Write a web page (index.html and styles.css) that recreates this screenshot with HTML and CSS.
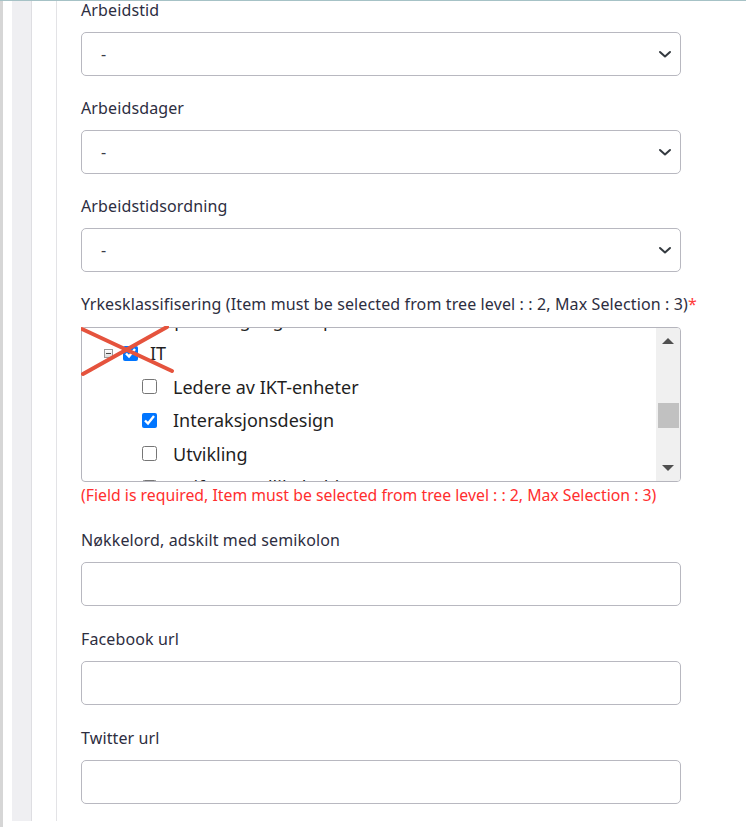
FILE: index.html
```html
<!DOCTYPE html>
<html lang="no">
<head>
<meta charset="utf-8">
<title>Skjema</title>
<link rel="stylesheet" href="styles.css">
</head>
<body>
<div class="shell">
  <div class="edge"></div>
  <div class="frame">
    <div class="pad"></div>
    <div class="rail"></div>
    <div class="gutter"></div>
    <main class="content">
      <form class="form">
        <div class="group">
          <label class="label">Arbeidstid</label>
          <div class="select"><span class="dash">-</span><svg class="chev" width="14" height="9" viewBox="0 0 14 9"><path d="M2 2 L7 6.5 L12 2" fill="none" stroke="#343a40" stroke-width="2" stroke-linecap="round" stroke-linejoin="round"/></svg></div>
        </div>
        <div class="group">
          <label class="label">Arbeidsdager</label>
          <div class="select"><span class="dash">-</span><svg class="chev" width="14" height="9" viewBox="0 0 14 9"><path d="M2 2 L7 6.5 L12 2" fill="none" stroke="#343a40" stroke-width="2" stroke-linecap="round" stroke-linejoin="round"/></svg></div>
        </div>
        <div class="group">
          <label class="label">Arbeidstidsordning</label>
          <div class="select"><span class="dash">-</span><svg class="chev" width="14" height="9" viewBox="0 0 14 9"><path d="M2 2 L7 6.5 L12 2" fill="none" stroke="#343a40" stroke-width="2" stroke-linecap="round" stroke-linejoin="round"/></svg></div>
        </div>
        <div class="group group-tree">
          <label class="label label-tree">Yrkesklassifisering (Item must be selected from tree level : : 2, Max Selection : 3)<span class="req">*</span></label>
          <div class="tree-wrap">
            <div class="tree">
              <div class="tree-list">
                <div class="row lvl1 top"><span class="exp"></span><input type="checkbox" class="cb"><span class="txt">Skipsfart og regnskap</span></div>
                <div class="row lvl1"><span class="exp exp-open"></span><input type="checkbox" class="cb" checked><span class="txt">IT</span></div>
                <div class="row lvl2"><input type="checkbox" class="cb"><span class="txt">Ledere av IKT-enheter</span></div>
                <div class="row lvl2"><input type="checkbox" class="cb" checked><span class="txt">Interaksjonsdesign</span></div>
                <div class="row lvl2"><input type="checkbox" class="cb"><span class="txt">Utvikling</span></div>
                <div class="row lvl2"><input type="checkbox" class="cb"><span class="txt">Drift og vedlikehold</span></div>
              </div>
              <div class="sb">
                <div class="sb-btn"><span class="arr-up"></span></div>
                <div class="sb-space-top"></div>
                <div class="sb-thumb"></div>
                <div class="sb-space"></div>
                <div class="sb-btn"><span class="arr-down"></span></div>
              </div>
            </div>
            <svg class="cross" width="96" height="54" viewBox="0 0 96 54"><path d="M1 3 L91 45 M2 48 L86 1" fill="none" stroke="#e5533d" stroke-width="4" stroke-linecap="round"/></svg>
          </div>
          <div class="error">(Field is required, Item must be selected from tree level : : 2, Max Selection : 3)</div>
        </div>
        <div class="group group-input">
          <label class="label">Nøkkelord, adskilt med semikolon</label>
          <input class="input" type="text">
        </div>
        <div class="group group-input">
          <label class="label">Facebook url</label>
          <input class="input" type="text">
        </div>
        <div class="group group-input">
          <label class="label">Twitter url</label>
          <input class="input" type="text">
        </div>
      </form>
    </main>
  </div>
</div>
</body>
</html>
```
FILE: styles.css
```css
html, body {
  margin: 0;
  padding: 0;
  background: #ffffff;
}
body {
  font-family: "Noto Sans", "Open Sans", sans-serif;
  color: #2d2e3f;
}
.shell {
  display: flex;
  align-items: flex-start;
  border-top: 1px solid #a6c2c6;
  height: 826px;
  overflow: hidden;
}
.edge {
  width: 3px;
  height: 826px;
  background: #d6d6d6;
  flex: none;
}
.frame {
  display: flex;
  flex: 1;
  height: 820px;
  min-width: 0;
}
.pad {
  width: 9px;
  flex: none;
}
.rail {
  width: 19px;
  flex: none;
  background: #efeff2;
  border-right: 1px solid #dedee2;
}
.gutter {
  width: 24px;
  flex: none;
  border-right: 1px solid #e3e3e6;
}
.content {
  flex: 1;
  padding-left: 24px;
  overflow: hidden;
}
.form {
  width: 600px;
  margin-top: -3px;
}
.group {
  margin-bottom: 20px;
}
.group-tree {
  margin-bottom: 23px;
}
.group-input {
  margin-bottom: 21px;
}
.label {
  display: block;
  font-size: 16px;
  letter-spacing: 0.12px;
  line-height: 24px;
  margin-bottom: 10px;
  white-space: nowrap;
}
.label-tree {
  margin-bottom: 11px;
}
.req {
  color: #ff3b3b;
}
.select {
  height: 44px;
  box-sizing: border-box;
  border: 1px solid #b8b8c0;
  border-radius: 5px;
  display: flex;
  align-items: center;
  justify-content: space-between;
  padding: 0 8px 0 19px;
  font-size: 16px;
  color: #3a3b48;
}
.chev {
  display: block;
}
.input {
  display: block;
  width: 600px;
  height: 44px;
  box-sizing: border-box;
  border: 1px solid #b8b8c0;
  border-radius: 5px;
  margin: 0;
  padding: 0 12px;
  font: inherit;
  background: #fff;
}
.tree-wrap {
  position: relative;
}
.tree {
  display: flex;
  height: 155px;
  box-sizing: border-box;
  border: 1px solid #b5b5bd;
  border-radius: 4px;
  overflow: hidden;
}
.tree-list {
  flex: 1;
  overflow: hidden;
}
.row {
  height: 33.5px;
  display: flex;
  align-items: center;
  font-size: 18px;
  white-space: nowrap;
  color: #1f1f1f;
}
.row.top {
  margin-top: -25px;
}
.lvl1 {
  padding-left: 22px;
}
.lvl2 {
  padding-left: 60px;
}
.exp {
  width: 9px;
  height: 9px;
  margin-right: 10px;
  flex: none;
}
.exp-open {
  box-sizing: border-box;
  border: 1px solid #9a9a9a;
  background: linear-gradient(#ffffff, #dcdcdc);
  position: relative;
}
.exp-open::after {
  content: "";
  position: absolute;
  left: 1px;
  right: 1px;
  top: 3px;
  height: 1px;
  background: #4a4a4a;
}
.cb {
  width: 15px;
  height: 15px;
  margin: 0;
  flex: none;
  accent-color: #0075ff;
}
.lvl1 .cb {
  margin-right: 12px;
}
.lvl2 .cb {
  margin-right: 16px;
}
.sb {
  width: 24px;
  flex: none;
  background: #f0f0f0;
  display: flex;
  flex-direction: column;
}
.sb-btn {
  height: 26px;
  display: flex;
  align-items: center;
  justify-content: center;
  flex: none;
}
.arr-up {
  width: 0;
  height: 0;
  border-left: 6px solid transparent;
  border-right: 6px solid transparent;
  border-bottom: 6px solid #505050;
}
.arr-down {
  width: 0;
  height: 0;
  border-left: 6px solid transparent;
  border-right: 6px solid transparent;
  border-top: 6px solid #505050;
}
.sb-space-top {
  height: 49px;
  flex: none;
}
.sb-thumb {
  height: 25px;
  margin: 0 1px 0 2px;
  background: #c1c1c1;
  flex: none;
}
.sb-space {
  flex: 1;
}
.cross {
  position: absolute;
  left: 0;
  top: -1px;
}
.error {
  font-size: 15.8px;
  line-height: 20px;
  margin-top: 3px;
  color: #ff2e2e;
  white-space: nowrap;
}
```
